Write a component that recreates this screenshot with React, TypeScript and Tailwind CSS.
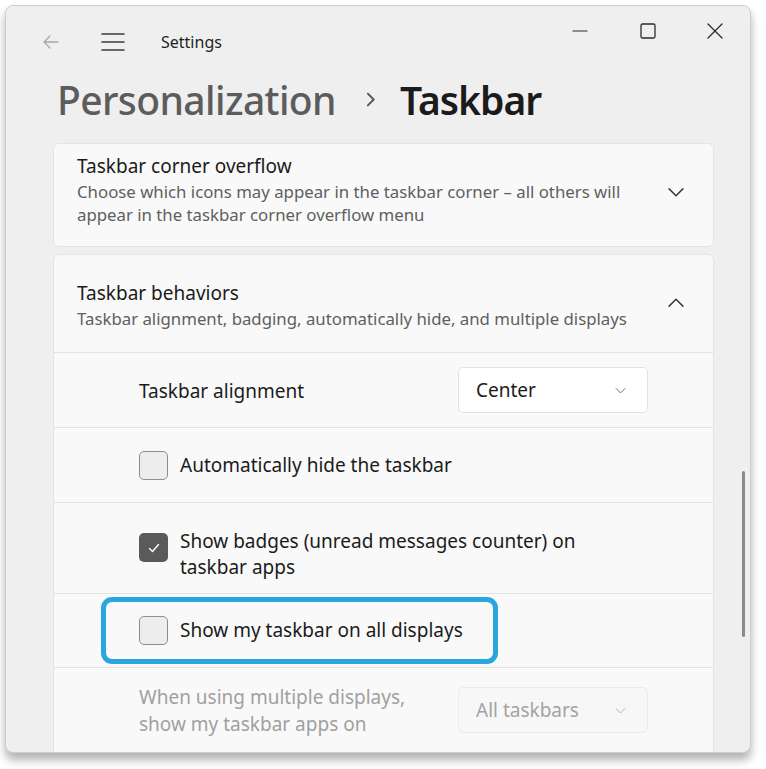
import React from 'react';

const ChevronDown = ({ className }: { className?: string }) => (
    <svg viewBox="0 0 16 16" className={className} fill="none" stroke="currentColor" strokeWidth="1.2" strokeLinecap="round" strokeLinejoin="round">
        <path d="M2.5 5.5l5.5 5.5 5.5-5.5" />
    </svg>
);

const ChevronUp = ({ className }: { className?: string }) => (
    <svg viewBox="0 0 16 16" className={className} fill="none" stroke="currentColor" strokeWidth="1.2" strokeLinecap="round" strokeLinejoin="round">
        <path d="M2.5 10.5l5.5-5.5 5.5 5.5" />
    </svg>
);

function Checkbox({ checked = false, className = '' }: { checked?: boolean; className?: string }) {
    if (checked) {
        return (
            <div className={`flex h-[29px] w-[29px] shrink-0 items-center justify-center rounded-[5px] bg-[#5a5a5a] ${className}`}>
                <svg viewBox="0 0 16 16" className="h-[16px] w-[16px]" fill="none" stroke="white" strokeWidth="1.4" strokeLinecap="round" strokeLinejoin="round">
                    <path d="M3.5 8.5l3 3 6-7" />
                </svg>
            </div>
        );
    }
    return <div className={`h-[29px] w-[29px] shrink-0 rounded-[5px] border border-[#8d8d8d] bg-[#ededed] ${className}`} />;
}

function Dropdown({ value, disabled = false, className = '' }: { value: string; disabled?: boolean; className?: string }) {
    return (
        <div
            className={`flex h-[46px] w-[190px] items-center justify-between rounded-[5px] border pl-[17px] pr-[20px] text-[19px] ${
                disabled ? 'border-[#ececec] bg-[#f7f7f7] text-[#a3a3a3]' : 'border-[#e2e2e2] bg-white text-[#1b1b1b]'
            } ${className}`}
        >
            <span>{value}</span>
            <ChevronDown className={`h-[13px] w-[13px] ${disabled ? 'text-[#b3b3b3]' : 'text-[#6b6b6b]'}`} />
        </div>
    );
}

export default function App() {
    return (
        <div className="h-[769px] w-[766px] overflow-hidden bg-white pl-[5px] pt-[5px] font-['Noto_Sans',sans-serif]">
            <div className="flex h-[748px] w-[746px] flex-col overflow-hidden rounded-[8px] border border-[#cdcdcd] bg-[#efefef] shadow-[0_7px_10px_rgba(0,0,0,0.3)]">
                {/* title bar */}
                <div className="flex h-[66px] shrink-0 items-start">
                    <div className="flex h-[72px] items-center">
                        <svg viewBox="0 0 20 20" className="ml-[35px] h-[20px] w-[20px] text-[#a6a6a6]" fill="none" stroke="currentColor" strokeWidth="1.3" strokeLinecap="round" strokeLinejoin="round">
                            <path d="M17 10H3M9 4l-6 6 6 6" />
                        </svg>
                        <svg viewBox="0 0 24 24" className="ml-[40px] h-[24px] w-[24px] text-[#3c3c3c]" fill="none" stroke="currentColor" strokeWidth="1.6" strokeLinecap="round">
                            <path d="M1 4h22M1 12h22M1 20h22" />
                        </svg>
                        <span className="ml-[36px] text-[16px] text-[#1f1f1f]">Settings</span>
                    </div>
                    <div className="ml-auto flex h-[50px] items-center pr-[27px]">
                        <svg viewBox="0 0 16 16" className="h-[16px] w-[16px] text-[#2b2b2b]" fill="none" stroke="currentColor" strokeWidth="1.2">
                            <path d="M0.5 8h15" />
                        </svg>
                        <svg viewBox="0 0 16 16" className="ml-[52px] h-[16px] w-[16px] text-[#2b2b2b]" fill="none" stroke="currentColor" strokeWidth="1.3">
                            <rect x="1" y="1" width="14" height="14" rx="1.5" />
                        </svg>
                        <svg viewBox="0 0 16 16" className="ml-[51px] h-[16px] w-[16px] text-[#2b2b2b]" fill="none" stroke="currentColor" strokeWidth="1.3" strokeLinecap="round">
                            <path d="M1 1l14 14M15 1L1 15" />
                        </svg>
                    </div>
                </div>

                {/* header */}
                <div className="flex h-[66px] shrink-0 items-center pb-[12px] pl-[51px] text-[39px] leading-none tracking-[-0.6px]">
                    <span className="font-medium text-[#5c5c5c]">Personalization</span>
                    <svg viewBox="0 0 16 16" className="ml-[26px] mr-[21px] h-[17px] w-[17px] text-[#555555]" fill="none" stroke="currentColor" strokeWidth="1.8" strokeLinecap="round" strokeLinejoin="round">
                        <path d="M5.5 2.5l5.5 5.5-5.5 5.5" />
                    </svg>
                    <span className="font-semibold tracking-[-1px] text-[#1b1b1b]">Taskbar</span>
                </div>

                {/* content */}
                <div className="relative flex min-h-0 flex-1 items-start">
                    <div className="ml-[47px] mt-[5px] flex w-[661px] shrink-0 flex-col gap-[7px]">
                        {/* corner overflow */}
                        <div className="flex h-[104px] shrink-0 items-start rounded-[6px] border border-[#e4e4e4] bg-[#f9f9f9] pl-[23px] pr-[27px] pt-[10px]">
                            <div className="flex-1">
                                <div className="text-[19px] leading-[24px] text-[#1b1b1b]">Taskbar corner overflow</div>
                                <div className="mt-[2px] text-[16.8px] leading-[23px] text-[#5f5f5f]">
                                    Choose which icons may appear in the taskbar corner – all others will
                                    <br />
                                    appear in the taskbar corner overflow menu
                                </div>
                            </div>
                            <ChevronDown className="mt-[28px] h-[20px] w-[20px] text-[#3a3a3a]" />
                        </div>

                        {/* behaviors */}
                        <div className="flex shrink-0 flex-col gap-px overflow-hidden rounded-t-[6px] border border-[#e4e4e4] bg-[#e3e3e3]">
                            <div className="flex h-[97px] shrink-0 items-start bg-[#f9f9f9] pl-[23px] pr-[27px] pt-[26px]">
                                <div className="flex-1">
                                    <div className="text-[19px] leading-[24px] text-[#1b1b1b]">Taskbar behaviors</div>
                                    <div className="mt-[2px] text-[16.8px] leading-[23px] text-[#5f5f5f]">
                                        Taskbar alignment, badging, automatically hide, and multiple displays
                                    </div>
                                </div>
                                <ChevronUp className="mt-[12px] h-[20px] w-[20px] text-[#3a3a3a]" />
                            </div>

                            <div className="flex h-[74px] shrink-0 items-center justify-between bg-[#f9f9f9] pl-[85px] pr-[65px]">
                                <span className="pt-[3px] text-[19px] text-[#1b1b1b]">Taskbar alignment</span>
                                <Dropdown value="Center" />
                            </div>

                            <div className="flex h-[74px] shrink-0 items-center gap-[12px] bg-[#f9f9f9] pl-[85px]">
                                <Checkbox />
                                <span className="text-[19px] text-[#1b1b1b]">Automatically hide the taskbar</span>
                            </div>

                            <div className="flex h-[90px] shrink-0 items-start gap-[12px] bg-[#f9f9f9] pl-[85px]">
                                <Checkbox checked className="mt-[30px]" />
                                <span className="mt-[25px] text-[19px] leading-[26px] text-[#1b1b1b]">
                                    Show badges (unread messages counter) on
                                    <br />
                                    taskbar apps
                                </span>
                            </div>

                            <div className="relative flex h-[73px] shrink-0 items-center gap-[12px] bg-[#f9f9f9] pl-[85px]">
                                <Checkbox />
                                <span className="text-[19px] text-[#1b1b1b]">Show my taskbar on all displays</span>
                                <div className="absolute left-[47px] top-[3px] h-[67px] w-[397px] rounded-[11px] border-[5px] border-[#2aa6df]" />
                            </div>

                            <div className="flex h-[90px] shrink-0 items-start justify-between bg-[#f9f9f9] pl-[85px] pr-[65px]">
                                <span className="mt-[16px] text-[19px] leading-[27px] text-[#a0a0a0]">
                                    When using multiple displays,
                                    <br />
                                    show my taskbar apps on
                                </span>
                                <Dropdown value="All taskbars" disabled className="mt-[19px]" />
                            </div>
                        </div>
                    </div>

                    {/* scrollbar */}
                    <div className="ml-[28px] mt-[333px] h-[166px] w-[3px] rounded-full bg-[#8a8a8a]" />
                </div>
            </div>
        </div>
    );
}
